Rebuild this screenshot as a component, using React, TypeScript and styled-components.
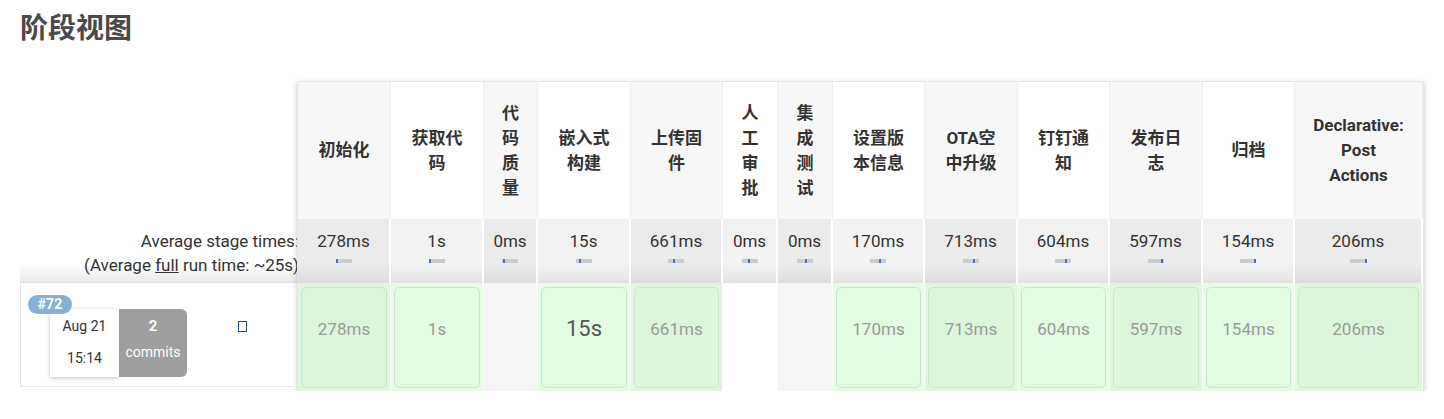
import styled, { createGlobalStyle } from "styled-components";

const GlobalStyle = createGlobalStyle`
  html, body {
    margin: 0;
    padding: 0;
    background: #fff;
  }
  body {
    font-family: Roboto, "Noto Sans CJK SC", sans-serif;
    color: #333;
  }
`;

type Stage = {
  name: string;
  width: number;
  avg: string;
  tick: number;
  run?: string;
  longest?: boolean;
};

const stages: Stage[] = [
  { name: "初始化", width: 93, avg: "278ms", tick: 0, run: "278ms" },
  { name: "获取代码", width: 93, avg: "1s", tick: 0, run: "1s" },
  { name: "代码质量", width: 54, avg: "0ms", tick: 1 },
  { name: "嵌入式构建", width: 93, avg: "15s", tick: 3, run: "15s", longest: true },
  { name: "上传固件", width: 92, avg: "661ms", tick: 5, run: "661ms" },
  { name: "人工审批", width: 55, avg: "0ms", tick: 6 },
  { name: "集成测试", width: 55, avg: "0ms", tick: 8 },
  { name: "设置版本信息", width: 92, avg: "170ms", tick: 9, run: "170ms" },
  { name: "OTA空中升级", width: 93, avg: "713ms", tick: 10, run: "713ms" },
  { name: "钉钉通知", width: 92, avg: "604ms", tick: 10, run: "604ms" },
  { name: "发布日志", width: 93, avg: "597ms", tick: 13, run: "597ms" },
  { name: "归档", width: 92, avg: "154ms", tick: 14, run: "154ms" },
  { name: "Declarative:\nPost\nActions", width: 128, avg: "206ms", tick: 15, run: "206ms" },
];

export default function App() {
  return (
    <>
      <GlobalStyle />
      <Title>阶段视图</Title>
      <StageView>
        <BuildColumn>
          <HeaderSpacer />
          <AverageLabel>
            <span>Average stage times:</span>
            <span>
              (Average <u>full</u> run time: ~25s)
            </span>
          </AverageLabel>
          <BuildRow>
            <Badge>#72</Badge>
            <DateBox>
              <span>Aug 21</span>
              <TimeText>15:14</TimeText>
            </DateBox>
            <Commits>
              <b>2</b>
              <span>commits</span>
            </Commits>
            <Tofu />
          </BuildRow>
        </BuildColumn>

        <StageTable $columns={stages.map((s) => `${s.width}px`).join(" ")}>
          {stages.map((s, i) => (
            <HeaderCell key={`h${i}`} $odd={i % 2 === 0}>
              {s.name}
            </HeaderCell>
          ))}
          {stages.map((s, i) => (
            <AverageCell key={`a${i}`} $odd={i % 2 === 0}>
              <span>{s.avg}</span>
              <TimeBar>
                <Tick style={{ left: s.tick }} />
              </TimeBar>
            </AverageCell>
          ))}
          {stages.map((s, i) => (
            <RunCell key={`r${i}`} $odd={i % 2 === 0} $success={!!s.run}>
              {s.run && (
                <RunBox $odd={i % 2 === 0} $longest={!!s.longest}>
                  {s.run}
                </RunBox>
              )}
            </RunCell>
          ))}
        </StageTable>
      </StageView>
    </>
  );
}

const Title = styled.h2`
  margin: 0;
  padding: 8px 20px 0;
  font-family: "Noto Sans CJK SC", sans-serif;
  font-size: 28px;
  line-height: 36px;
  font-weight: 700;
  color: #4a4a4a;
`;

const StageView = styled.div`
  display: flex;
  align-items: flex-start;
  margin-top: 37px;
  padding: 0 20px;
`;

const BuildColumn = styled.div`
  width: 277px;
  display: flex;
  flex-direction: column;
`;

const HeaderSpacer = styled.div`
  height: 138px;
`;

const AverageLabel = styled.div`
  height: 64px;
  box-sizing: border-box;
  padding-top: 10px;
  display: flex;
  flex-direction: column;
  align-items: flex-end;
  font-size: 17px;
  line-height: 24px;
  color: #333;
  white-space: nowrap;
  background: linear-gradient(to bottom, #fff 0%, #fff 72%, #e9e9e9 100%);
  border-bottom: 1px solid #e2e2e2;
  margin-right: -2px;
`;

const BuildRow = styled.div`
  position: relative;
  height: 104px;
  box-sizing: border-box;
  display: flex;
  align-items: flex-start;
  padding: 26px 0 0 29px;
  border-left: 1px solid #e6e6e6;
  border-bottom: 1px solid #e6e6e6;
`;

const Badge = styled.span`
  position: absolute;
  top: 12px;
  left: 7px;
  z-index: 1;
  width: 44px;
  height: 19px;
  border-radius: 10px;
  background: #8aafd6;
  color: #fff;
  font-size: 14px;
  font-weight: 700;
  line-height: 19px;
  text-align: center;
`;

const DateBox = styled.div`
  width: 69px;
  height: 68px;
  box-sizing: border-box;
  padding-top: 6px;
  display: flex;
  flex-direction: column;
  align-items: center;
  background: #fff;
  box-shadow: 0 1px 4px rgba(0, 0, 0, 0.25);
  font-size: 14px;
  line-height: 22px;
  color: #333;
`;

const TimeText = styled.span`
  margin-top: 10px;
`;

const Commits = styled.div`
  width: 68px;
  height: 68px;
  box-sizing: border-box;
  padding-top: 6px;
  display: flex;
  flex-direction: column;
  align-items: center;
  background: #9e9e9e;
  border-radius: 0 6px 6px 0;
  color: #fff;
  font-size: 14px;
  line-height: 22px;

  b {
    font-size: 15px;
  }

  span {
    margin-top: 4px;
  }
`;

const Tofu = styled.span`
  width: 9px;
  height: 11px;
  box-sizing: border-box;
  margin: 12px 0 0 51px;
  border: 1.5px solid #2b4f8c;
`;

const StageTable = styled.div<{ $columns: string }>`
  display: grid;
  grid-template-columns: ${(p) => p.$columns};
  grid-template-rows: 137px 64px 108px;
  border: 1px solid #e6e6e6;
  border-bottom: none;
  box-shadow: 0 2px 5px rgba(0, 0, 0, 0.22);
  background: #fff;
`;

const HeaderCell = styled.div<{ $odd: boolean }>`
  display: flex;
  align-items: center;
  justify-content: center;
  padding: 0 16px;
  text-align: center;
  white-space: pre-line;
  font-weight: 700;
  font-size: 17px;
  line-height: 25px;
  color: #333;
  background: ${(p) => (p.$odd ? "#f7f7f7" : "#fff")};
  border-right: 1px solid #efefef;
`;

const AverageCell = styled.div<{ $odd: boolean }>`
  display: flex;
  flex-direction: column;
  align-items: center;
  padding-top: 10px;
  font-size: 17px;
  line-height: 24px;
  color: #333;
  border-right: 2px solid #fff;
  background: ${(p) =>
    p.$odd
      ? "linear-gradient(to bottom, #ebebeb 0%, #ebebeb 72%, #dcdcdc 100%)"
      : "linear-gradient(to bottom, #f2f2f2 0%, #f2f2f2 72%, #e2e2e2 100%)"};
`;

const TimeBar = styled.div`
  position: relative;
  width: 16px;
  height: 4px;
  margin-top: 6px;
  background: #cbcbcb;
`;

const Tick = styled.span`
  position: absolute;
  top: 0;
  width: 2px;
  height: 4px;
  background: #3d74d4;
`;

const RunCell = styled.div<{ $odd: boolean; $success: boolean }>`
  box-sizing: border-box;
  padding: 4px 3px 3px;
  border-right: 1px solid #fafafa;
  background: ${(p) =>
    p.$success ? (p.$odd ? "#e2f6df" : "#e8fbe7") : p.$odd ? "#f5f5f5" : "#fff"};
`;

const RunBox = styled.div<{ $odd: boolean; $longest: boolean }>`
  height: 100%;
  box-sizing: border-box;
  padding-top: 28px;
  text-align: center;
  border: 1px solid #cde4ca;
  border-radius: 5px;
  background: ${(p) => (p.$odd ? "#ddf5da" : "#e3fbe2")};
  font-size: ${(p) => (p.$longest ? "22px" : "17px")};
  line-height: 26px;
  color: ${(p) => (p.$longest ? "#555" : "#9a9a9a")};
`;
